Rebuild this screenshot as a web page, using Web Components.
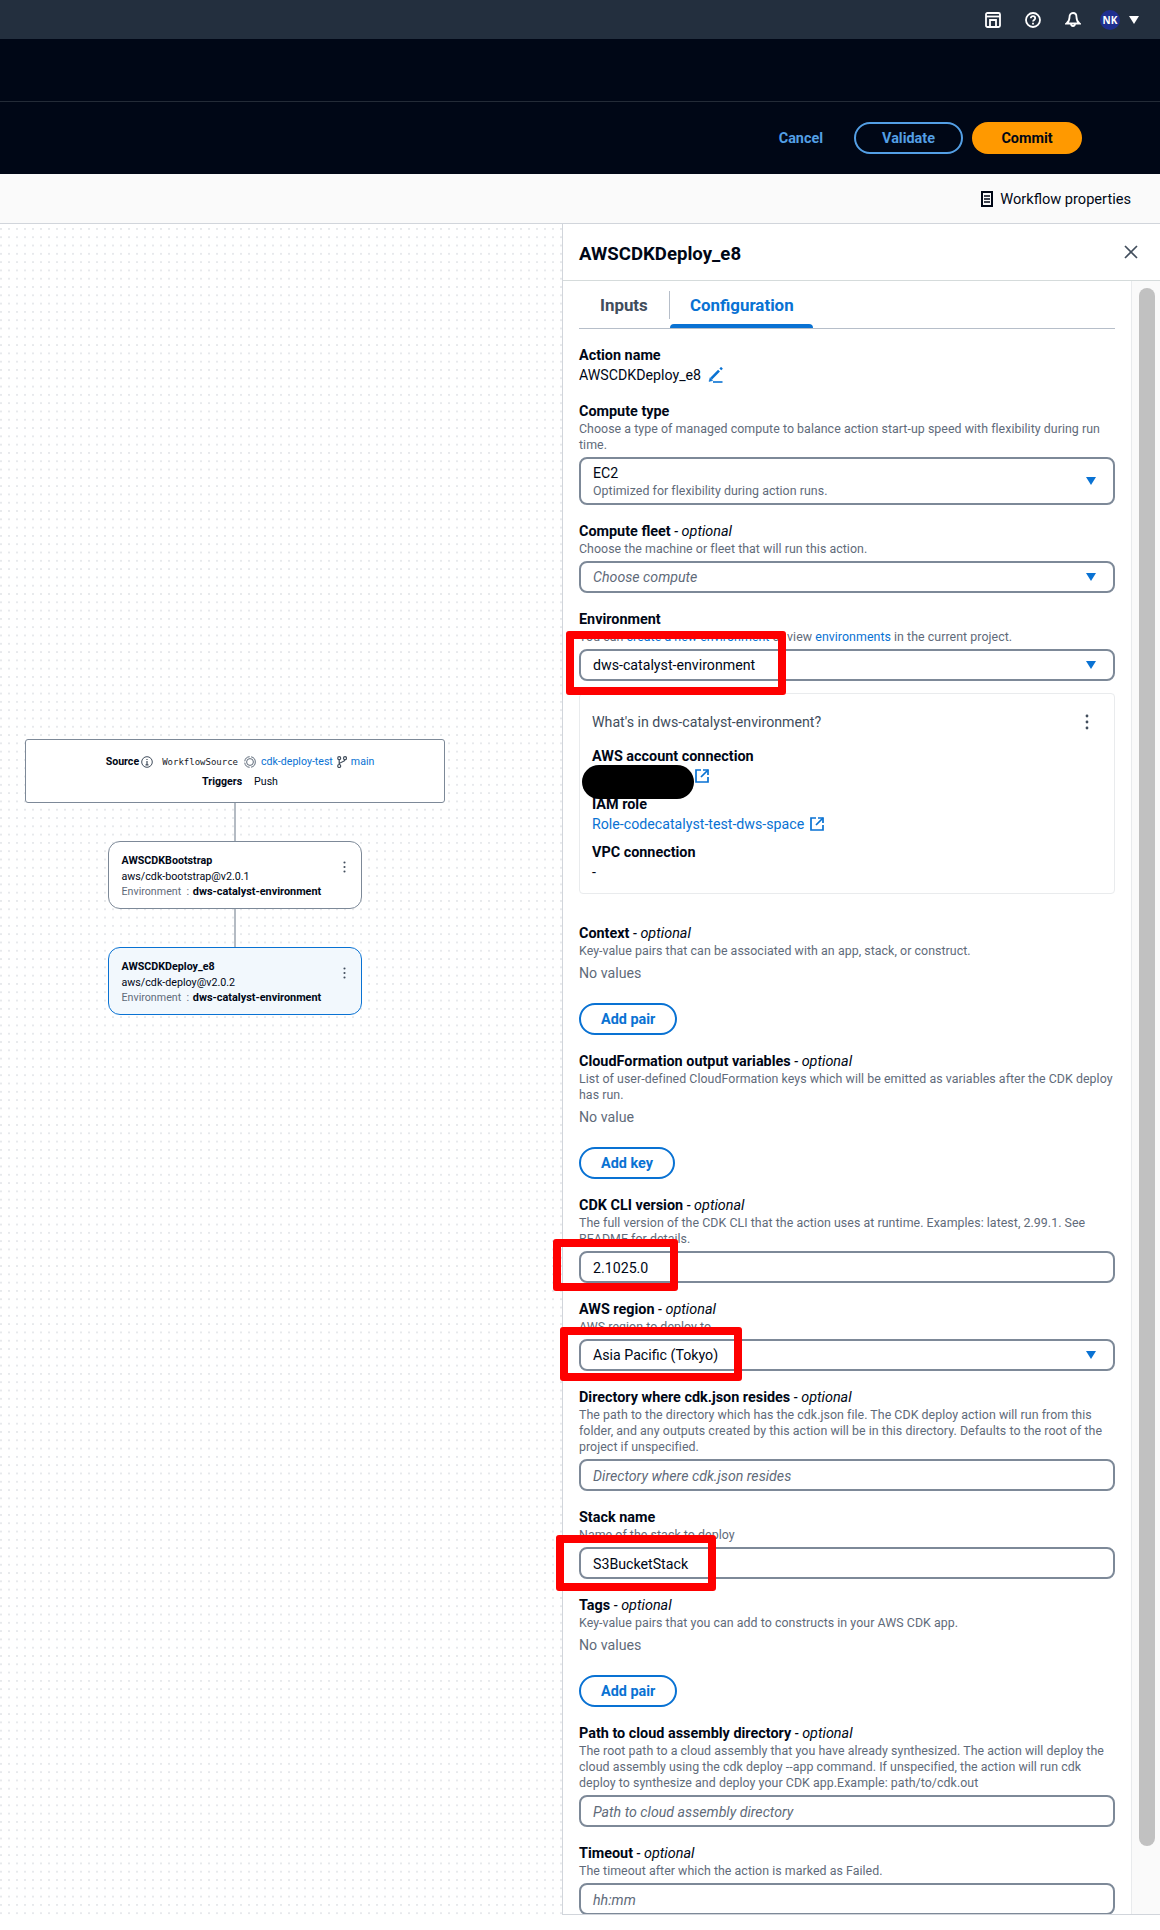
<!DOCTYPE html>
<html lang="en">
<head>
<meta charset="utf-8">
<title>Workflow editor</title>
<style>
  html, body { margin: 0; padding: 0; background: #fff; }
  body { font-family: Roboto, "Liberation Sans", sans-serif; font-size: 14.2px; line-height: 20px; color: #000716; }
  #page { position: relative; width: 1160px; height: 1930px; overflow: hidden; }
  form-field a { color: #0972d3; }
</style>
</head>
<body>
<div id="page">
  <top-bar></top-bar>
  <action-bar></action-bar>
  <props-bar></props-bar>
  <main-area>
    <workflow-canvas slot="canvas">
      <source-node></source-node>
      <graph-line></graph-line>
      <action-node name="AWSCDKBootstrap" version="aws/cdk-bootstrap@v2.0.1"></action-node>
      <graph-line></graph-line>
      <action-node selected name="AWSCDKDeploy_e8" version="aws/cdk-deploy@v2.0.2"></action-node>
    </workflow-canvas>
    <config-panel slot="panel">
      <form-field label="Action name">
        <div style="display:flex;align-items:center;gap:7px;height:20px">AWSCDKDeploy_e8
          <svg width="16" height="16" viewBox="0 0 16 16" fill="none" stroke="#0972d3"><path d="M1 14.500 2 10.800 4.700 13.500z" fill="#0972d3" stroke-width="0.500"/><path d="M3.200 11.700 11 3.700M12.300 2.400 14 0.800" stroke-width="2.600"/><path d="M5 15h9.500" stroke-width="1.600"/></svg>
        </div>
      </form-field>
      <form-field label="Compute type" desc="Choose a type of managed compute to balance action start-up speed with flexibility during run time.">
        <select-box value="EC2" sub="Optimized for flexibility during action runs."></select-box>
      </form-field>
      <form-field label="Compute fleet" optional desc="Choose the machine or fleet that will run this action.">
        <select-box placeholder="Choose compute"></select-box>
      </form-field>
      <form-field label="Environment">
        <span slot="desc">You can <a>create a new environment</a> or view <a>environments</a> in the current project.</span>
        <select-box value="dws-catalyst-environment"></select-box>
        <env-card></env-card>
      </form-field>
      <form-field style="margin-top:13px" label="Context" optional desc="Key-value pairs that can be associated with an app, stack, or construct.">
        <empty-list text="No values" action="Add pair"></empty-list>
      </form-field>
      <form-field label="CloudFormation output variables" optional desc="List of user-defined CloudFormation keys which will be emitted as variables after the CDK deploy has run.">
        <empty-list text="No value" action="Add key"></empty-list>
      </form-field>
      <form-field label="CDK CLI version" optional desc="The full version of the CDK CLI that the action uses at runtime. Examples: latest, 2.99.1. See README for details.">
        <text-box value="2.1025.0"></text-box>
      </form-field>
      <form-field label="AWS region" optional desc="AWS region to deploy to.">
        <select-box value="Asia Pacific (Tokyo)"></select-box>
      </form-field>
      <form-field label="Directory where cdk.json resides" optional desc="The path to the directory which has the cdk.json file. The CDK deploy action will run from this folder, and any outputs created by this action will be in this directory. Defaults to the root of the project if unspecified.">
        <text-box placeholder="Directory where cdk.json resides"></text-box>
      </form-field>
      <form-field label="Stack name" desc="Name of the stack to deploy">
        <text-box value="S3BucketStack"></text-box>
      </form-field>
      <form-field label="Tags" optional desc="Key-value pairs that you can add to constructs in your AWS CDK app.">
        <empty-list text="No values" action="Add pair"></empty-list>
      </form-field>
      <form-field label="Path to cloud assembly directory" optional desc="The root path to a cloud assembly that you have already synthesized. The action will deploy the cloud assembly using the cdk deploy --app command. If unspecified, the action will run cdk deploy to synthesize and deploy your CDK app.Example: path/to/cdk.out">
        <text-box placeholder="Path to cloud assembly directory"></text-box>
      </form-field>
      <form-field label="Timeout" optional desc="The timeout after which the action is marked as Failed.">
        <text-box placeholder="hh:mm"></text-box>
      </form-field>
    </config-panel>
  </main-area>
  <red-mark x="566" y="631" w="220" h="64"></red-mark>
  <red-mark x="553" y="1239" w="125" h="52"></red-mark>
  <red-mark x="560" y="1327" w="182" h="54"></red-mark>
  <red-mark x="556" y="1535" w="160" h="56"></red-mark>
</div>

<script>
const CARET = `<svg width="10" height="8" viewBox="0 0 10 8"><path d="M0 0h10L5 8z" fill="#0972d3"/></svg>`;
const DOTS = (c, w, h) => `<svg width="${w}" height="${h}" viewBox="0 0 4 16" fill="${c}"><circle cx="2" cy="2" r="1.400"/><circle cx="2" cy="8" r="1.400"/><circle cx="2" cy="14" r="1.400"/></svg>`;
const EXTERNAL = `<svg width="14" height="14" viewBox="0 0 14 14" fill="none" stroke="#0972d3" stroke-width="1.700"><path d="M6 1H1v12h12V8"/><path d="M8 1h5v5"/><path d="M13 1 6 8"/></svg>`;

// Top navigation strip
class TopBar extends HTMLElement {
  constructor() {
    super();
    this.attachShadow({ mode: 'open' });
    this.shadowRoot.innerHTML = `
      <style>
        :host { display: flex; height: 39px; background: #232f3e; align-items: center; justify-content: flex-end; padding-right: 21px; box-sizing: border-box; }
        svg { display: block; }
        .row { display: flex; align-items: center; }
        .avatar { width: 20px; height: 20px; border-radius: 50%; background: #1f2f8f; color: #fff; font: 700 10px/20px "Open Sans", sans-serif; text-align: center; margin-left: 19px; }
      </style>
      <div class="row">
        <svg width="16" height="16" viewBox="0 0 16 16" fill="none" stroke="#fff" stroke-width="1.800"><rect x="1" y="1" width="14" height="14" rx="1.500"/><path d="M1 4.500h14"/><path d="M5 15V8h6v7"/></svg>
        <svg style="margin-left:24px" width="16" height="16" viewBox="0 0 16 16" fill="none" stroke="#fff" stroke-width="1.800"><circle cx="8" cy="8" r="7"/><path d="M5.800 6.200C5.800 4.900 6.800 4.200 8 4.200s2.200.8 2.200 2c0 1.700-2.200 1.800-2.200 3.400"/><path d="M8 10.800v1.600"/></svg>
        <svg style="margin-left:24px" width="16" height="16" viewBox="0 0 16 16" fill="none" stroke="#fff" stroke-width="1.800"><path d="M8 1c2.400 0 3.500 1.900 3.500 4.200 0 3 1 4.800 3 6.300h-13c2-1.500 3-3.300 3-6.300C4.500 2.900 5.600 1 8 1z"/><path d="M6 11.500a2 2.500 0 0 0 4 0"/></svg>
        <div class="avatar">NK</div>
        <svg style="margin-left:9px" width="10" height="8" viewBox="0 0 10 8"><path d="M0 0h10L5 8z" fill="#fff"/></svg>
      </div>`;
  }
}
customElements.define('top-bar', TopBar);

// Dark header with the commit buttons
class ActionBar extends HTMLElement {
  constructor() {
    super();
    this.attachShadow({ mode: 'open' });
    this.shadowRoot.innerHTML = `
      <style>
        :host { display: block; background: #000716; height: 135px; font-size: 14.4px; font-weight: 700; }
        .title { height: 62px; border-bottom: 1px solid #232b37; }
        .actions { height: 72px; display: flex; align-items: center; justify-content: flex-end; padding-right: 78px; }
        .cancel { color: #539fe5; margin-right: 31px; padding-top: 2px; }
        .btn { height: 32px; box-sizing: border-box; border-radius: 16px; display: flex; align-items: center; justify-content: center; width: 110px; padding-top: 2px; }
        .validate { border: 2px solid #539fe5; color: #539fe5; width: 109px; margin-right: 9px; }
        .commit { background: #ff9900; color: #000716; }
      </style>
      <div class="title"></div>
      <div class="actions">
        <span class="cancel">Cancel</span>
        <span class="btn validate">Validate</span>
        <span class="btn commit">Commit</span>
      </div>`;
  }
}
customElements.define('action-bar', ActionBar);

class PropsBar extends HTMLElement {
  constructor() {
    super();
    this.attachShadow({ mode: 'open' });
    this.shadowRoot.innerHTML = `
      <style>
        :host { display: flex; height: 50px; box-sizing: border-box; background: #fafafa; border-bottom: 1px solid #d1d5db; align-items: center; justify-content: flex-end; padding-right: 29px; font-size: 14.6px; }
        svg { margin-right: 7px; }
        span { padding-top: 1px; }
      </style>
      <svg width="12" height="16" viewBox="0 0 12 16" fill="none" stroke="#000716" stroke-width="2"><rect x="1" y="1" width="10" height="14"/><path d="M3 5h6M3 8h6M3 11h6" stroke-width="1.400"/></svg>
      <span>Workflow properties</span>`;
  }
}
customElements.define('props-bar', PropsBar);

class MainArea extends HTMLElement {
  constructor() {
    super();
    this.attachShadow({ mode: 'open' });
    this.shadowRoot.innerHTML = `
      <style>
        :host { display: flex; height: 1691px; }
      </style>
      <slot name="canvas"></slot>
      <slot name="panel"></slot>`;
  }
}
customElements.define('main-area', MainArea);

// Dotted canvas holding the graph
class WorkflowCanvas extends HTMLElement {
  constructor() {
    super();
    this.attachShadow({ mode: 'open' });
    this.shadowRoot.innerHTML = `
      <style>
        :host {
          display: flex; flex-direction: column; align-items: center;
          width: 562px; box-sizing: border-box; padding: 515px 117px 0 25px;
          background-image: radial-gradient(circle at 1px 1px, #e7e9ec 0.8px, transparent 1px);
          background-size: 8px 8.3px;
          background-position: 0 4px;
        }
      </style>
      <slot></slot>`;
  }
}
customElements.define('workflow-canvas', WorkflowCanvas);

class GraphLine extends HTMLElement {
  constructor() {
    super();
    this.attachShadow({ mode: 'open' });
    this.shadowRoot.innerHTML = `
      <style>:host { display: block; width: 2px; height: 38px; background: #b4bbc3; }</style>`;
  }
}
customElements.define('graph-line', GraphLine);

class SourceNode extends HTMLElement {
  constructor() {
    super();
    this.attachShadow({ mode: 'open' });
    this.shadowRoot.innerHTML = `
      <style>
        :host { display: flex; flex-direction: column; align-items: center; width: 420px; height: 64px; box-sizing: border-box; background: #fff; border: 1.5px solid #7d8998; border-radius: 3px; padding: 14px 0 0 10px; font-size: 10.6px; line-height: 16px; }
        .row { display: flex; align-items: center; height: 16px; margin-bottom: 4px; }
        b { font-weight: 700; }
        .mono { font: 9px/16px "DejaVu Sans Mono", monospace; color: #16191f; margin: 0 6px 0 9px; }
        a { color: #0972d3; }
        svg { display: block; }
      </style>
      <div class="row">
        <b>Source</b>
        <svg style="margin-left:2px" width="12" height="12" viewBox="0 0 12 12" fill="none" stroke="#414d5c" stroke-width="1"><circle cx="6" cy="6" r="5.300"/><path d="M6 5v3.500M4.500 8.800h3M6 3v1" stroke-width="1.200"/></svg>
        <span class="mono">WorkflowSource</span>
        <svg width="12" height="12" viewBox="0 0 12 12" fill="none" stroke="#5f6b7a" stroke-width="1"><circle cx="6" cy="6" r="5.300" stroke-dasharray="7 1.500"/><circle cx="6" cy="6" r="3.400"/></svg>
        <a style="margin-left:5px">cdk-deploy-test</a>
        <svg style="margin:0 4px" width="10" height="12" viewBox="0 0 10 12" fill="none" stroke="#414d5c" stroke-width="1.200"><circle cx="2.200" cy="2.200" r="1.500"/><circle cx="8" cy="2.200" r="1.500"/><circle cx="2.200" cy="10" r="1.500"/><path d="M2.200 3.700v4.800M8 3.700c0 2.500-5.800 2-5.800 4.500"/></svg>
        <a>main</a>
      </div>
      <div class="row">
        <b>Triggers</b><span style="margin-left:12px">Push</span>
      </div>`;
  }
}
customElements.define('source-node', SourceNode);

class ActionNode extends HTMLElement {
  constructor() {
    super();
    this.attachShadow({ mode: 'open' });
    const selected = this.hasAttribute('selected');
    this.shadowRoot.innerHTML = `
      <style>
        :host { display: flex; align-items: flex-start; justify-content: space-between; width: 254px; height: 68px; box-sizing: border-box; border: 1.5px solid ${selected ? '#0972d3' : '#7d8998'}; background: ${selected ? '#f2f8fd' : '#fff'}; border-radius: 12px; padding: 11px 15px 0 12.5px; font-size: 10.7px; line-height: 15.5px; }
        b { font-weight: 700; }
        .env { color: #5f6b7a; }
        .env b { color: #000716; margin-left: 1px; font-size: 10.9px; }
        .dots { margin-top: 8px; }
      </style>
      <div>
        <div><b>${this.getAttribute('name')}</b></div>
        <div>${this.getAttribute('version')}</div>
        <div class="env">Environment &nbsp;: <b>dws-catalyst-environment</b></div>
      </div>
      <div class="dots">${DOTS('#414d5c', 3, 12)}</div>`;
  }
}
customElements.define('action-node', ActionNode);

// Right-hand side panel with tabs, form body and scroll thumb
class ConfigPanel extends HTMLElement {
  constructor() {
    super();
    this.attachShadow({ mode: 'open' });
    this.shadowRoot.innerHTML = `
      <style>
        :host { display: flex; flex-direction: column; width: 598px; box-sizing: border-box; border-left: 1px solid #d1d5db; border-bottom: 1px solid #d1d5db; background: #fff; overflow: hidden; }
        header { height: 57px; box-sizing: border-box; flex: none; display: flex; align-items: center; justify-content: space-between; padding: 0 22px 0 16px; border-bottom: 1px solid #d5dbdb; font-size: 18.6px; font-weight: 700; }
        header span { padding-top: 4px; }
        .body { flex: 1; min-height: 0; display: flex; }
        .content { flex: 1; min-width: 0; padding: 0 16px; overflow: hidden; }
        .tabs { height: 48px; box-sizing: border-box; display: flex; border-bottom: 1px solid #b6bec9; font-size: 16.9px; font-weight: 700; margin-bottom: 16px; }
        .tab { position: relative; height: 47px; display: flex; align-items: center; box-sizing: border-box; padding-top: 1px; }
        .inputs { width: 90px; padding-left: 21px; color: #414d5c; }
        .sep { width: 1px; height: 28px; margin-top: 10px; background: #b6bec9; }
        .config { width: 143px; padding-left: 20px; color: #0972d3; }
        .config::after { content: ""; position: absolute; left: 0; right: 0; bottom: 0; height: 4px; background: #0972d3; border-radius: 4px 4px 0 0; }
        .fields { display: flex; flex-direction: column; gap: 16px; }
        .track { flex: none; width: 29px; box-sizing: border-box; background: #fafafa; border-left: 1px solid #e9ebed; padding: 7px 5px 0 7px; }
        .thumb { width: 16px; height: 1558px; background: #c1c1c1; border-radius: 8px; }
      </style>
      <header>
        <span>AWSCDKDeploy_e8</span>
        <svg width="14" height="14" viewBox="0 0 14 14" fill="none" stroke="#414d5c" stroke-width="1.700"><path d="M1 1l12 12M13 1 1 13"/></svg>
      </header>
      <div class="body">
        <div class="content">
          <div class="tabs">
            <div class="tab inputs">Inputs</div>
            <div class="sep"></div>
            <div class="tab config">Configuration</div>
          </div>
          <div class="fields"><slot></slot></div>
        </div>
        <div class="track"><div class="thumb"></div></div>
      </div>`;
  }
}
customElements.define('config-panel', ConfigPanel);

class FormField extends HTMLElement {
  constructor() {
    super();
    this.attachShadow({ mode: 'open' });
    const desc = this.getAttribute('desc');
    const optional = this.hasAttribute('optional');
    this.shadowRoot.innerHTML = `
      <style>
        :host { display: block; }
        label { display: block; font-size: 14.4px; font-weight: 700; padding-top: 1px; margin-bottom: -1px; }
        i { font-weight: 400; }
        .desc { color: #5f6b7a; font-size: 12.38px; letter-spacing: 0.05px; line-height: 16px; }
      </style>
      <label>${this.getAttribute('label')}${optional ? ' <i>- optional</i>' : ''}</label>
      <div class="desc"><slot name="desc">${desc || ''}</slot></div>
      <slot></slot>`;
  }
}
customElements.define('form-field', FormField);

class SelectBox extends HTMLElement {
  constructor() {
    super();
    this.attachShadow({ mode: 'open' });
    const value = this.getAttribute('value');
    const sub = this.getAttribute('sub');
    const placeholder = this.getAttribute('placeholder');
    this.shadowRoot.innerHTML = `
      <style>
        :host { display: flex; align-items: center; justify-content: space-between; box-sizing: border-box; min-height: 32px; margin-top: 4px; border: 2px solid #7d8998; border-radius: 8px; padding: 3px 17px 3px 12px; background: #fff; }
        .ph { font-style: italic; color: #5f6b7a; }
        .two { padding: 1px 0; }
        .sub { font-size: 12.38px; letter-spacing: 0.05px; line-height: 16px; color: #5f6b7a; }
        .v { line-height: 20px; }
        svg { display: block; flex: none; }
      </style>
      <div class="${sub ? 'two' : ''}">
        ${placeholder ? `<div class="v ph">${placeholder}</div>` : `<div class="v">${value}</div>`}
        ${sub ? `<div class="sub">${sub}</div>` : ''}
      </div>
      ${CARET}`;
  }
}
customElements.define('select-box', SelectBox);

class TextBox extends HTMLElement {
  constructor() {
    super();
    this.attachShadow({ mode: 'open' });
    const placeholder = this.getAttribute('placeholder');
    this.shadowRoot.innerHTML = `
      <style>
        :host { display: flex; align-items: center; box-sizing: border-box; height: 32px; margin-top: 4px; border: 2px solid #7d8998; border-radius: 8px; padding: 1px 12px 0; background: #fff; }
        .ph { font-style: italic; color: #5f6b7a; }
      </style>
      ${placeholder ? `<span class="ph">${placeholder}</span>` : `<span>${this.getAttribute('value')}</span>`}`;
  }
}
customElements.define('text-box', TextBox);

// "No values" text plus the add button under it
class EmptyList extends HTMLElement {
  constructor() {
    super();
    this.attachShadow({ mode: 'open' });
    this.shadowRoot.innerHTML = `
      <style>
        :host { display: block; }
        .t { color: #5f6b7a; margin-top: 4px; }
        .b { display: inline-flex; align-items: center; height: 32px; box-sizing: border-box; margin-top: 20px; padding: 2px 20px 0; border: 2px solid #0972d3; border-radius: 16px; color: #0972d3; font-size: 14.4px; font-weight: 700; vertical-align: top; }
      </style>
      <div class="t">${this.getAttribute('text')}</div>
      <div class="b">${this.getAttribute('action')}</div>`;
  }
}
customElements.define('empty-list', EmptyList);

class EnvCard extends HTMLElement {
  constructor() {
    super();
    this.attachShadow({ mode: 'open' });
    this.shadowRoot.innerHTML = `
      <style>
        :host { display: block; height: 201px; box-sizing: border-box; margin-top: 12px; border: 1px solid #e9ebed; border-radius: 4px; padding: 18px 12px 0; background: #fff; }
        .head { display: flex; justify-content: space-between; align-items: center; color: #414d5c; height: 20px; padding-right: 13px; margin-bottom: 14px; }
        b { display: block; font-size: 14.4px; font-weight: 700; padding-top: 1px; margin-bottom: -1px; }
        .val { height: 20px; box-sizing: border-box; margin-bottom: 8px; color: #0972d3; display: flex; align-items: center; gap: 6px; position: relative; }
        .acct { padding-left: 103px; }
        .blob { position: absolute; left: -10px; top: -1px; width: 112px; height: 34px; background: #000; border-radius: 17px; }
        .dash { color: #000716; }
        svg { display: block; }
      </style>
      <div class="head"><span>What's in dws-catalyst-environment?</span>${DOTS('#414d5c', 4, 16)}</div>
      <b>AWS account connection</b>
      <div class="val acct"><span class="blob"></span>${EXTERNAL}</div>
      <b>IAM role</b>
      <div class="val"><span>Role-codecatalyst-test-dws-space</span>${EXTERNAL}</div>
      <b>VPC connection</b>
      <div class="val dash">-</div>`;
  }
}
customElements.define('env-card', EnvCard);

// Red annotation boxes drawn over the screenshot
class RedMark extends HTMLElement {
  constructor() {
    super();
    this.attachShadow({ mode: 'open' });
    const a = (n) => this.getAttribute(n);
    this.shadowRoot.innerHTML = `
      <style>
        :host { position: absolute; left: ${a('x')}px; top: ${a('y')}px; width: ${a('w')}px; height: ${a('h')}px; box-sizing: border-box; border: 8px solid #fe0000; border-radius: 3px; pointer-events: none; }
      </style>`;
  }
}
customElements.define('red-mark', RedMark);
</script>
</body>
</html>
